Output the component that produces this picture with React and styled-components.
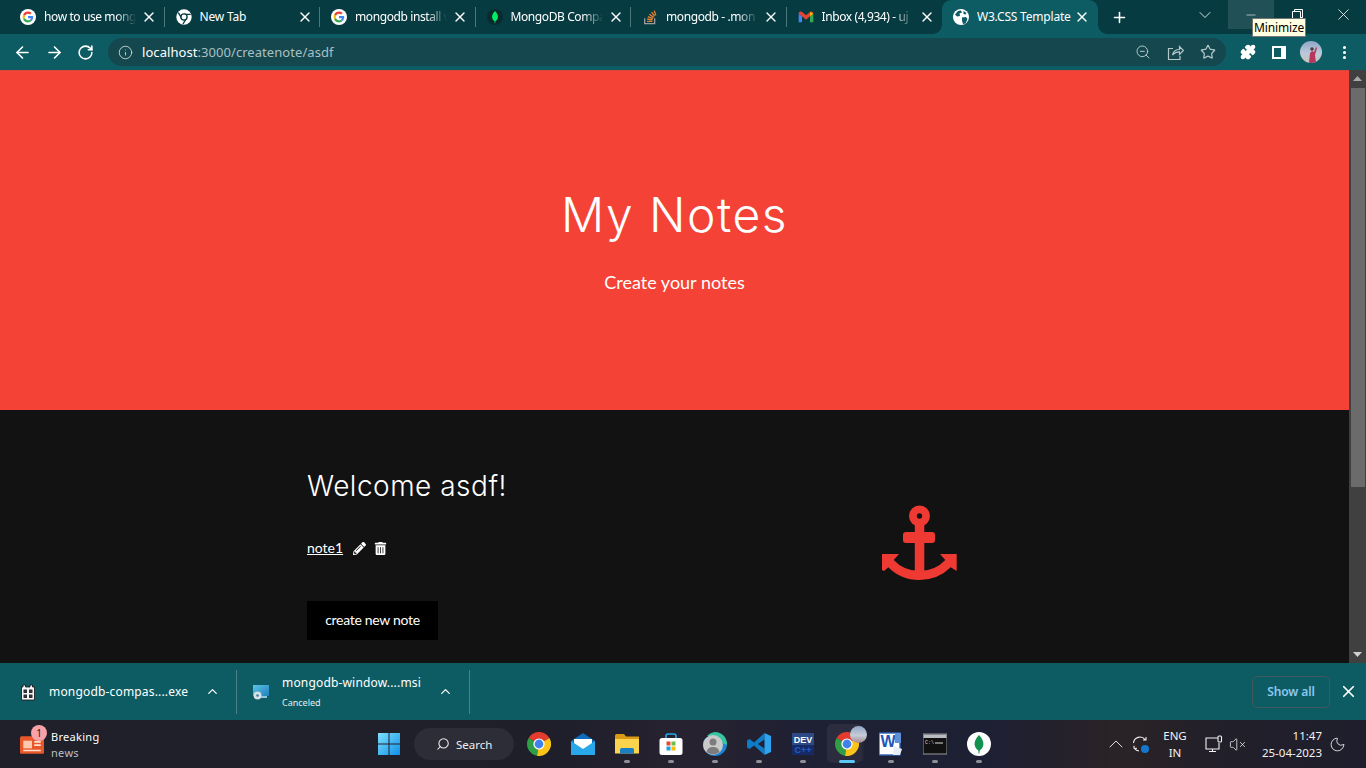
import React from "react";
import styled, { createGlobalStyle } from "styled-components";
import { ArrowLeft, ArrowRight, RotateCw, Info, ZoomOut, Star, ChevronDown, ChevronUp, Minus, X, Plus, Search, EllipsisVertical, VolumeX, Moon, Puzzle } from "lucide-react";
import { FaPencilAlt, FaTrashAlt } from "react-icons/fa";

const Global = createGlobalStyle`
  html, body { margin: 0; padding: 0; background: #121212; overflow: hidden; }
  * { box-sizing: border-box; }
  #root { width: 1366px; height: 768px; }
`;

const Screen = styled.div`
  width: 1366px; height: 768px; display: flex; flex-direction: column; overflow: hidden; position: relative;
  font-family: "Noto Sans", "Open Sans", sans-serif; color: #fff;
`;

const TabStrip = styled.div`
  height: 34px; flex: none; background: #073b42; display: flex; align-items: stretch; padding-left: 9px; position: relative;
`;
const Tab = styled.div`
  width: 155.5px; flex: none; display: flex; align-items: center; padding-left: 11px; position: relative;
  &::after {
    content: ""; position: absolute; right: 0; top: 7px; bottom: 7px; width: 1px;
    background: ${p => (p.$sep ? "#4d777c" : "transparent")};
  }
`;
const ActiveTab = styled(Tab)`
  background: #0e5c63; border-radius: 9px 9px 0 0;
  &::before, &::after {
    content: ""; position: absolute; top: auto; bottom: 0; width: 9px; height: 9px;
  }
  &::before { left: -9px; right: auto; background: radial-gradient(circle at 0 0, transparent 8.5px, #0e5c63 9px); }
  &::after { right: -9px; left: auto; background: radial-gradient(circle at 100% 0, transparent 8.5px, #0e5c63 9px); }
`;
const FavSlot = styled.span`width: 16px; height: 16px; flex: none; display: flex; margin-right: 8px;`;
const TabTitle = styled.span`
  font-size: 12px; line-height: 16px; width: 94px; flex: none; white-space: nowrap; overflow: hidden; color: #fff;
  letter-spacing: ${p => (p.$full ? "-0.2px" : "-0.4px")};
  -webkit-mask-image: ${p => (p.$full ? "none" : "linear-gradient(90deg,#000 76%,transparent 98%)")};
  mask-image: ${p => (p.$full ? "none" : "linear-gradient(90deg,#000 76%,transparent 98%)")};
`;
const TabClose = styled.span`margin-left: 3px; display: flex; color: #fff;`;
const NewTab = styled.span`margin-left: 13px; display: flex; align-items: center; color: #fff;`;
const WinControls = styled.div`margin-left: auto; display: flex; align-items: flex-start; height: 29px;`;
const WinBtn = styled.span`
  width: 46px; height: 29px; display: flex; align-items: center; justify-content: center; color: #fff;
  background: ${p => (p.$hover ? "#215057" : "transparent")};
`;
const Tooltip = styled.div`
  position: absolute; left: 1252px; top: 18px; width: 54px; height: 19px; background: #ffffe1; border: 1px solid #767676;
  color: #000; font-size: 12px; line-height: 17px; text-align: center; z-index: 5; letter-spacing: -0.15px;
`;

const Toolbar = styled.div`
  height: 36px; flex: none; background: #0e5c63; display: flex; align-items: center; padding-left: 13px; color: #fff;
`;
const NavBtn = styled.span`width: 32px; height: 20px; flex: none; display: flex; align-items: center; justify-content: flex-start;`;
const Omnibox = styled.div`
  width: 1118px; height: 28px; margin-left: -1px; border-radius: 14px; background: #15474f; display: flex; align-items: center; padding: 0 10px;
`;
const Url = styled.span`font-size: 13px; margin-left: 9px; color: #a9c0c3; letter-spacing: 0.06px; b { font-weight: 400; color: #fff; }`;
const OmniIcons = styled.div`margin-left: auto; display: flex; gap: 16px; color: #b4c8ca; align-items: center;`;
const ToolRight = styled.div`display: flex; align-items: center; margin-left: 14px; gap: 14px;`;
const PuzzleGlyph = styled(Puzzle)`margin-right: 2px; fill: #fff;`;
const PanelIcon = styled.span`
  width: 14px; height: 13px; background: linear-gradient(90deg, #0e5c63 0 7px, #fff 7px); border: 2px solid #fff; display: block;
`;
const Avatar = styled.span`
  width: 22px; height: 22px; border-radius: 50%; overflow: hidden; display: block;
  background: linear-gradient(180deg,#8fa6c6 0%,#bcc9dc 55%,#c9c2b6 100%);
`;

const Page = styled.div`height: 593px; flex: none; display: flex; background: #121212;`;
const Main = styled.main`flex: 1; min-width: 0; display: flex; flex-direction: column;`;
const Hero = styled.header`
  height: 340px; background: #f44336; text-align: center; padding-top: 115px; border-top: 1px solid #d9453a;
`;
const Title = styled.h1`
  margin: 0; font: 300 48px/58px Inter, sans-serif; color: #fff; letter-spacing: 1.5px;
`;
const Sub = styled.p`margin: 26px 0 0; font: 400 18px/24px Lato, sans-serif; color: #fff;`;
const Dark = styled.section`flex: 1; background: #121212; display: flex; padding-left: 307px; padding-top: 58px;`;
const Left = styled.div`width: 575px; flex: none;`;
const Welcome = styled.h2`margin: 0; font: 300 28px/36px Inter, sans-serif; color: #fff; letter-spacing: 0.5px;`;
const NoteRow = styled.div`margin-top: 32px; height: 24px; display: flex; align-items: center; gap: 10px; font: 400 14px/24px Lato, sans-serif;`;
const NoteLink = styled.a`color: #fff; text-decoration: underline;`;
const PencilGlyph = styled(FaPencilAlt)`margin-right: -2px;`;
const CreateBtn = styled.button`
  display: block; margin-top: 41px; width: 131px; height: 39px; background: #000; color: #fff; border: 0; padding: 0 0 2px;
  font: 400 14px/37px Lato, sans-serif; letter-spacing: -0.3px;
`;
const AnchorWrap = styled.div`margin-top: 37px; align-self: flex-start; display: flex;`;

const Scrollbar = styled.div`width: 17px; flex: none; background: #404040; display: flex; flex-direction: column; align-items: center; color: #a0a0a0;`;
const ScrollArrow = styled.span`height: 17px; flex: none; display: flex; align-items: center; justify-content: center;`;
const Thumb = styled.div`width: 14px; height: 399px; margin-top: 1px; background: #6b6b6b;`;
const ScrollSpace = styled.div`flex: 1;`;

const DownloadBar = styled.div`height: 57px; flex: none; background: #0e5c63; display: flex; align-items: center; padding-left: 20px;`;
const DlItem = styled.div`width: ${p => p.$w}px; padding-left: ${p => p.$pl || 0}px; flex: none; display: flex; align-items: center;`;
const DlIcon = styled.span`width: 16px; height: 16px; flex: none; display: flex; margin-right: 13px;`;
const DlText = styled.div`width: 139px; flex: none; white-space: nowrap; display: flex; flex-direction: column;`;
const DlName = styled.span`font-size: 12px; line-height: 16px; letter-spacing: 0.17px;`;
const DlNameTop = styled(DlName)`margin-top: 1px;`;
const DlStatus = styled.span`font-size: 9px; line-height: 13px; margin-top: 5px; color: #e4eeee;`;
const DlChev = styled.span`margin-left: 17px; display: flex; color: #fff;`;
const DlSep = styled.span`width: 1px; height: 44px; background: #4a8185; flex: none;`;
const ShowAll = styled.button`
  margin-left: auto; width: 78px; height: 32px; border: 1px solid #41585e; border-radius: 5px; background: transparent; color: #8cc6ef;
  font: 600 12px "Noto Sans", sans-serif; padding: 0; letter-spacing: -0.1px;
`;
const DlClose = styled.span`width: 36px; display: flex; justify-content: center; color: #fff;`;

const Taskbar = styled.div`
  height: 48px; flex: none; display: flex; align-items: center; position: relative;
  background: linear-gradient(90deg,#1f2029 0%,#20202a 28%,#1f1f2b 42%,#27222f 50%,#1e2034 60%,#1d1f33 72%,#2a2326 82%,#211f2a 90%,#1f1e2c 100%);
`;
const News = styled.div`width: 373px; flex: none; padding-left: 20px; display: flex; align-items: center; position: relative;`;
const NewsIcon = styled.span`width: 24px; height: 22px; display: flex; margin-right: 7px; position: relative;`;
const Badge = styled.span`
  position: absolute; left: 11px; top: -8px; width: 16px; height: 16px; border-radius: 50%; background: #f7a1a9; color: #30161a;
  font-size: 10px; line-height: 16px; text-align: center;
`;
const NewsText = styled.div`display: flex; flex-direction: column; font-size: 11px; line-height: 16px; letter-spacing: 0.3px; margin-top: 2px;`;
const NewsSub = styled.span`color: #bdbdc4;`;
const StartBtn = styled.span`width: 24px; height: 24px; display: flex; flex: none; margin-left: 4px;`;
const SearchPill = styled.div`
  width: 100px; height: 32px; margin-left: 13px; border-radius: 16px; background: #2d2d38; flex: none; display: flex; align-items: center; padding-left: 22px; gap: 6px;
  font-size: 11.5px; color: #eee;
`;
const SearchGlyph = styled(Search)`transform: scaleX(-1);`;
const Apps = styled.div`display: flex; margin-left: 3px; flex: none;`;
const AppSlot = styled.div`
  width: 44px; height: 48px; display: flex; align-items: center; justify-content: center; position: relative;
  &::before {
    content: ""; position: absolute; inset: 4px 7px 5px 2px; border-radius: 5px; display: ${p => (p.$active ? "block" : "none")};
    background: #2c2c3f; box-shadow: 3px 0 0 -1px #262636;
  }
  &::after {
    content: ""; position: absolute; bottom: 5px; left: 50%; transform: translateX(-50%); height: 3px; border-radius: 2px;
    width: ${p => (p.$active ? "16px" : "6px")}; background: ${p => (p.$active ? "#5cc8f8" : "#8f8f98")};
    display: ${p => (p.$dot ? "block" : "none")};
  }
  > * { position: relative; }
`;
const AppAvatar = styled.span`
  position: absolute !important; left: 25px; top: 6px; width: 17px; height: 17px; border-radius: 50%;
  background: linear-gradient(180deg,#8fa6c6 0%,#c5ccd8 55%,#a88a8e 100%);
`;
const Tray = styled.div`margin-left: auto; display: flex; align-items: center; color: #f2f2f2; padding-right: 20px;`;
const TrayIcon = styled.span`display: flex; position: relative; margin-left: ${p => p.$ml || 0}px;`;
const Dot = styled.span`position: absolute; right: 0; bottom: 0; width: 8px; height: 8px; border-radius: 50%; background: #1478d2;`;
const Lang = styled.div`width: 30px; margin-left: 11px; text-align: center; font-size: 11.5px; line-height: 17px;`;
const Clock = styled.div`width: 70px; margin-left: 6px; text-align: right; font-size: 11.5px; line-height: 17px; white-space: nowrap;`;

const G = () => (
  <svg width="16" height="16" viewBox="0 0 16 16">
    <circle cx="8" cy="8" r="8" fill="#fff" />
    <g transform="translate(2.6 2.6) scale(.225)">
      <path fill="#EA4335" d="M24 9.5c3.54 0 6.71 1.22 9.21 3.6l6.85-6.85C35.9 2.38 30.47 0 24 0 14.62 0 6.51 5.38 2.56 13.22l7.98 6.19C12.43 13.72 17.74 9.5 24 9.5z" />
      <path fill="#4285F4" d="M46.98 24.55c0-1.57-.15-3.09-.38-4.55H24v9.02h12.94c-.58 2.96-2.26 5.48-4.78 7.18l7.73 6c4.51-4.18 7.09-10.36 7.09-17.65z" />
      <path fill="#FBBC05" d="M10.53 28.59c-.48-1.45-.76-2.99-.76-4.59s.27-3.14.76-4.59l-7.98-6.19C.92 16.46 0 20.12 0 24c0 3.88.92 7.54 2.56 10.78l7.97-6.19z" />
      <path fill="#34A853" d="M24 48c6.48 0 11.93-2.13 16.08-5.81l-7.73-6c-2.15 1.45-4.92 2.3-8.35 2.3-6.26 0-11.57-4.22-13.47-9.91l-7.98 6.19C6.51 42.62 14.62 48 24 48z" />
    </g>
  </svg>
);
const ChromeMono = () => (
  <svg width="16" height="16" viewBox="0 0 24 24">
    <circle cx="12" cy="12" r="11.500" fill="#fff" />
    <path d="M12 8h10M8.500 14 3.500 5.500M15.500 14l-5 8.500" stroke="#073b42" strokeWidth="2" fill="none" />
    <circle cx="12" cy="12" r="4.600" fill="#fff" stroke="#073b42" strokeWidth="2" />
  </svg>
);
const Leaf = ({ c = "#00ed64", d = "#0b2a2e", size = 16 }) => (
  <svg width={size} height={size} viewBox="0 0 24 24">
    <circle cx="12" cy="12" r="12" fill={d} />
    <path d="M12 3c3.400 3.600 4.600 6.600 4.400 9.400-.2 3-2.200 5-3.700 6l-.3 3h-.8l-.3-3c-1.500-1-3.500-3-3.700-6C7.400 9.600 8.600 6.600 12 3z" fill={c} />
  </svg>
);
const SO = () => (
  <svg width="16" height="16" viewBox="0 0 24 24">
    <path d="M4 14v8h15v-8" fill="none" stroke="#9a9a9a" strokeWidth="2" />
    <path d="M7.500 18.500h8M7.800 15l8 1.200M8.800 11.300l7.600 3M11 7.800l6.500 4.800M14.400 4.600l4.600 6.200M18.400 2.500l2.300 7" stroke="#e8802c" strokeWidth="2" fill="none" />
  </svg>
);
const Gmail = () => (
  <svg width="16" height="16" viewBox="0 0 24 24">
    <path d="M1 7v13h5V11z" fill="#4285f4" />
    <path d="M23 7v13h-5V11z" fill="#34a853" />
    <path d="M1 7c0-3 3-4 5-2.500l6 5 6-5c2-1.500 5-.5 5 2.500l-5 4-6 5-6-5z" fill="#ea4335" />
    <path d="M18 4.500 23 7l-5 4z" fill="#fbbc05" />
  </svg>
);
const Globe = () => (
  <svg width="16" height="16" viewBox="0 0 16 16">
    <circle cx="8" cy="8" r="8" fill="#fff" />
    <path d="M2 5.500 5 2l3-.5 1 2-2.500 1L7 7 4 7.500zM9 8.500l4-.5 1.500 2-2 4.500-2.500.5-1-3.500zM10.500 2l3 2-1 1.500-2-.5z" fill="#0e5c63" />
  </svg>
);
const ShareGlyph = () => (
  <svg width="17" height="17" viewBox="0 0 17 17" fill="none" stroke="#b4c8ca" strokeWidth="1.200">
    <path d="M6 4.500H1.500V15.500H13V12" />
    <path d="M5.500 11c.8-3.500 3.500-5.500 7-5.500V2.500L16.500 6.500 12.500 10.500V7.800c-3 0-5.200 1-7 3.200z" />
  </svg>
);
const Anchor = () => (
  <svg width="76" height="76" viewBox="0 0 76 76" fill="#ee3a32">
    <circle cx="37.500" cy="11" r="6.600" fill="none" stroke="#ee3a32" strokeWidth="7.800" />
    <rect x="21" y="27" width="32" height="11" rx="3" />
    <rect x="32.800" y="16" width="9.500" height="52" />
    <path d="M0 49H17L11.700 55Q22 66 37.500 66T63.300 55L58 49H74.700V66L68.700 62.300Q56 75 37.400 75T6.300 62.300L2 66L0 65Z" />
  </svg>
);
const Chrome = ({ size = 24 }) => (
  <svg width={size} height={size} viewBox="0 0 24 24">
    <path d="M12 12 1.600 6A12 12 0 0 1 22.400 6Z" fill="#e33b2e" />
    <path d="M12 12 1.600 6A12 12 0 0 0 10 23.800Z" fill="#2f9e46" />
    <path d="M12 12 22.400 6A12 12 0 0 1 10 23.800Z" fill="#fcc419" />
    <circle cx="12" cy="12" r="5.600" fill="#fff" />
    <circle cx="12" cy="12" r="4.400" fill="#3f82ee" />
  </svg>
);
const StartIcon = () => (
  <svg width="24" height="24" viewBox="0 0 24 24">
    <defs><linearGradient id="st" x1="0" y1="0" x2="1" y2="1"><stop offset="0" stopColor="#7fe0ff" /><stop offset="1" stopColor="#0f8fe8" /></linearGradient></defs>
    <path d="M1 1h10.500v10.500H1zM12.500 1H23v10.500H12.500zM1 12.500h10.500V23H1zM12.500 12.500H23V23H12.500z" fill="url(#st)" />
  </svg>
);
const Mail = () => (
  <svg width="24" height="24" viewBox="0 0 24 24">
    <path d="M0 9 12 1l12 8v13H0z" fill="#0f6cbd" />
    <path d="M3 7h18v6L12 18 3 13z" fill="#fff" />
    <path d="M0 9v14h24V9L12 17z" fill="#28a8ea" />
  </svg>
);
const Folder = () => (
  <svg width="24" height="24" viewBox="0 0 24 24">
    <path d="M0 3.500 1 2h8l2 2.500h13V8H0z" fill="#d99a14" />
    <path d="M0 7h24v14.500H0z" fill="#fcd34d" />
    <path d="M5 17.500q0-1.500 1.500-1.500h11q1.500 0 1.500 1.500V21.500H5z" fill="#1b7fc4" />
  </svg>
);
const Store = () => (
  <svg width="24" height="24" viewBox="0 0 24 24">
    <path d="M7 7V4q0-2 2-2h6q2 0 2 2v3" fill="none" stroke="#28a8ea" strokeWidth="1.600" />
    <rect x="0.500" y="6" width="23" height="17" rx="2.500" fill="#fff" />
    <path d="M7.500 9.500h4v4h-4z" fill="#e8482f" /><path d="M12.500 9.500h4v4h-4z" fill="#6cc04a" />
    <path d="M7.500 14.500h4v4h-4z" fill="#1ba1e2" /><path d="M12.500 14.500h4v4h-4z" fill="#fbb90b" />
  </svg>
);
const Edge = () => (
  <svg width="24" height="24" viewBox="0 0 24 24">
    <path d="M12 0a12 12 0 0 1 12 12c0 3-3 5-6 5H8C14 15 12 6 4 4a12 12 0 0 1 8-4z" fill="#37c6a0" />
    <path d="M0 12C0 5 9 1 17 9c2 2 7 5 7 3a12 12 0 0 1-12 12A12 12 0 0 1 0 12z" fill="#1b84d6" />
    <circle cx="10" cy="13" r="10" fill="#c9c9c9" />
    <circle cx="10" cy="10" r="3.500" fill="#7d7d7d" />
    <path d="M3.500 20c1-4 3.500-5 6.500-5s5.500 1 6.500 5a10 10 0 0 1-13 0z" fill="#7d7d7d" />
  </svg>
);
const VSCode = () => (
  <svg width="24" height="24" viewBox="0 0 24 24">
    <path fillRule="evenodd" d="M17.500 1 7 10.500 2.500 7 0 8.500v7L2.500 17 7 13.500 17.500 23V16.500L11 12l6.500-4.500z" fill="#0f7cc8" />
    <path d="M17.500 1 24 4v16l-6.500 3z" fill="#2ea3f0" />
  </svg>
);
const DevCpp = () => (
  <svg width="24" height="24" viewBox="0 0 24 24">
    <rect x="1" y="1" width="22" height="22" fill="#2c4a86" />
    <rect x="1" y="13" width="22" height="10" fill="#162a66" />
    <text x="12" y="11" textAnchor="middle" fontFamily="Liberation Sans" fontWeight="700" fontSize="9" fill="#fff">DEV</text>
    <text x="12" y="21" textAnchor="middle" fontFamily="Liberation Sans" fontWeight="700" fontSize="9" fill="#1f5ec4">C++</text>
  </svg>
);
const Word = () => (
  <svg width="24" height="24" viewBox="0 0 24 24">
    <rect x="0" y="1" width="21" height="22" fill="#fff" />
    <rect x="0" y="1" width="21" height="22" fill="none" stroke="#2e62b8" strokeWidth="1.400" />
    <text x="9" y="15" textAnchor="middle" fontFamily="Liberation Sans" fontWeight="700" fontSize="16" fill="#1f56b5">W</text>
    <path d="M16 1h6v10h-6z" fill="#5f8fd6" />
    <path d="M15 14l8 3-2 6h-7z" fill="#e8edf6" />
  </svg>
);
const Cmd = () => (
  <svg width="24" height="24" viewBox="0 0 24 24">
    <rect x="0" y="2" width="24" height="20" fill="#111" stroke="#9a9a9a" />
    <rect x="0.500" y="2.500" width="23" height="3.500" fill="#b9bcc2" />
    <text x="2" y="12" fontFamily="Liberation Mono" fontSize="5" fill="#ddd">C:\</text>
    <path d="M12 11h8" stroke="#ddd" />
  </svg>
);
const Installer = () => (
  <svg width="16" height="17" viewBox="0 0 16 17">
    <path d="M1.500 3h1.500V1h2.500v2h4.500V1h2.500v2h2V16h-13z" fill="#f5f5f5" stroke="#111" strokeWidth=".8" />
    <path d="M3.500 5.500h3.500v3.500H3.500zM9 5.500h3.500v3.500H9zM3.500 10.500h3.500v3.500H3.500zM9 10.500h3.500v3.500H9z" fill="#2a3034" />
  </svg>
);
const Msi = () => (
  <svg width="16" height="16" viewBox="0 0 16 16">
    <defs><linearGradient id="ms" x1="0" y1="0" x2="1" y2="1"><stop offset="0" stopColor="#5cc3e8" /><stop offset="1" stopColor="#1f7fb8" /></linearGradient></defs>
    <rect x="0" y="1" width="16" height="11" fill="url(#ms)" />
    <rect x="4" y="12" width="10" height="2" fill="#8fc6dc" />
    <circle cx="4.500" cy="11.500" r="4" fill="#d5dfe4" />
    <circle cx="4.500" cy="11.500" r="1.200" fill="#2f7fa6" />
  </svg>
);
const NewsGlyph = () => (
  <svg width="24" height="22" viewBox="0 0 22 20">
    <rect x="0" y="3" width="22" height="16" rx="1.500" fill="#e8572a" />
    <rect x="3" y="7" width="8" height="7" fill="#ffc9b0" />
    <path d="M13 8h6M13 11h6M3 16h16" stroke="#ffe0d0" strokeWidth="1.500" />
  </svg>
);
const Sync = () => (
  <svg width="18" height="18" viewBox="0 0 18 18" fill="none" stroke="#f2f2f2" strokeWidth="1.100">
    <path d="M2.500 8A6.500 6.500 0 0 1 14 4.500M15 2v3h-3M3 13.500l3-.2M3 10.800v2.700M3.500 13.500A6.500 6.500 0 0 0 8 16" />
  </svg>
);
const Monitor = () => (
  <svg width="18" height="18" viewBox="0 0 18 18" fill="none" stroke="#f2f2f2" strokeWidth="1.100">
    <path d="M13 3H1v11h13V8M7.500 14v2.500M4 16.500h7" />
    <rect x="13" y="1" width="3.500" height="6" rx="1" />
  </svg>
);

const tabs = [
  { t: "how to use mong", i: <G />, sep: true },
  { t: "New Tab", i: <ChromeMono />, sep: true, full: true },
  { t: "mongodb install v", i: <G />, sep: true },
  { t: "MongoDB Compa", i: <Leaf />, sep: true },
  { t: "mongodb - .mon", i: <SO />, sep: true },
  { t: "Inbox (4,934) - uj", i: <Gmail /> },
];
const apps = [
  { i: <Chrome /> }, { i: <Mail /> }, { i: <Folder />, dot: true }, { i: <Store />, dot: true }, { i: <Edge />, dot: true },
  { i: <VSCode />, dot: true }, { i: <DevCpp />, dot: true }, { i: <Chrome />, dot: true, active: true }, { i: <Word />, dot: true },
  { i: <Cmd />, dot: true }, { i: <Leaf c="#12924f" d="#fff" size={24} />, dot: true },
];

export default function App() {
  return (
    <Screen>
      <Global />
      <TabStrip>
        {tabs.map(tb => (
          <Tab key={tb.t} $sep={tb.sep}>
            <FavSlot>{tb.i}</FavSlot>
            <TabTitle $full={tb.full}>{tb.t}</TabTitle>
            <TabClose><X size={16} strokeWidth={2} /></TabClose>
          </Tab>
        ))}
        <ActiveTab>
          <FavSlot><Globe /></FavSlot>
          <TabTitle $full>W3.CSS Template</TabTitle>
          <TabClose><X size={16} strokeWidth={2} /></TabClose>
        </ActiveTab>
        <NewTab><Plus size={17} strokeWidth={2.200} /></NewTab>
        <WinControls>
          <WinBtn><ChevronDown size={20} strokeWidth={1} /></WinBtn>
          <WinBtn $hover><Minus size={14} strokeWidth={1} /></WinBtn>
          <WinBtn>
            <svg width="11" height="11" viewBox="0 0 11 11" fill="none" stroke="#fff"><path d="M.5 2.500h8v8h-8zM2.500 2.500v-2h8v8h-2" /></svg>
          </WinBtn>
          <WinBtn><X size={19} strokeWidth={1} /></WinBtn>
        </WinControls>
        <Tooltip>Minimize</Tooltip>
      </TabStrip>

      <Toolbar>
        <NavBtn><ArrowLeft size={19} strokeWidth={2} /></NavBtn>
        <NavBtn><ArrowRight size={19} strokeWidth={2} /></NavBtn>
        <NavBtn><RotateCw size={17} strokeWidth={2.200} /></NavBtn>
        <Omnibox>
          <Info size={15} color="#c3d3d5" strokeWidth={1.500} />
          <Url><b>localhost</b>:3000/createnote/asdf</Url>
          <OmniIcons>
            <ZoomOut size={16} strokeWidth={1.500} />
            <ShareGlyph />
            <Star size={16} strokeWidth={1.800} />
          </OmniIcons>
        </Omnibox>
        <ToolRight>
          <PuzzleGlyph size={16} strokeWidth={2} />
          <PanelIcon />
          <Avatar>
            <svg width="22" height="22" viewBox="0 0 22 22">
              <path d="M9 22l1-10 2-2 2 1 2-5 1 1-2 7 1 8z" fill="#b5365f" />
              <circle cx="12" cy="8" r="1.800" fill="#5a3a3a" />
            </svg>
          </Avatar>
          <EllipsisVertical size={17} strokeWidth={2.400} />
        </ToolRight>
      </Toolbar>

      <Page>
        <Main>
          <Hero>
            <Title>My Notes</Title>
            <Sub>Create your notes</Sub>
          </Hero>
          <Dark>
            <Left>
              <Welcome>Welcome asdf!</Welcome>
              <NoteRow>
                <NoteLink href="#">note1</NoteLink>
                <PencilGlyph size={13} />
                <FaTrashAlt size={13} />
              </NoteRow>
              <CreateBtn>create new note</CreateBtn>
            </Left>
            <AnchorWrap><Anchor /></AnchorWrap>
          </Dark>
        </Main>
        <Scrollbar>
          <ScrollArrow><svg width="9" height="5" viewBox="0 0 9 5"><path d="M4.500 0 9 5H0z" fill="#a8a8a8" /></svg></ScrollArrow>
          <Thumb />
          <ScrollSpace />
          <ScrollArrow><svg width="9" height="5" viewBox="0 0 9 5"><path d="M4.500 5 9 0H0z" fill="#d0d0d0" /></svg></ScrollArrow>
        </Scrollbar>
      </Page>

      <DownloadBar>
        <DlItem $w={216}>
          <DlIcon><Installer /></DlIcon>
          <DlText><DlName>mongodb-compas....exe</DlName></DlText>
          <DlChev><ChevronUp size={15} strokeWidth={2} /></DlChev>
        </DlItem>
        <DlSep />
        <DlItem $w={232} $pl={16}>
          <DlIcon><Msi /></DlIcon>
          <DlText>
            <DlNameTop>mongodb-window....msi</DlNameTop>
            <DlStatus>Canceled</DlStatus>
          </DlText>
          <DlChev><ChevronUp size={15} strokeWidth={2} /></DlChev>
        </DlItem>
        <DlSep />
        <ShowAll>Show all</ShowAll>
        <DlClose><X size={19} strokeWidth={2.200} /></DlClose>
      </DownloadBar>

      <Taskbar>
        <News>
          <NewsIcon>
            <NewsGlyph />
            <Badge>1</Badge>
          </NewsIcon>
          <NewsText>Breaking<NewsSub>news</NewsSub></NewsText>
        </News>
        <StartBtn><StartIcon /></StartBtn>
        <SearchPill><SearchGlyph size={14} strokeWidth={1.800} />Search</SearchPill>
        <Apps>
          {apps.map((a, i) => (
            <AppSlot key={i} $dot={a.dot} $active={a.active}>
              {a.i}
              {a.active && <AppAvatar />}
            </AppSlot>
          ))}
        </Apps>
        <Tray>
          <ChevronUp size={24} strokeWidth={0.900} />
          <TrayIcon $ml={3}><Sync /><Dot /></TrayIcon>
          <Lang>ENG<br />IN</Lang>
          <TrayIcon $ml={15}><Monitor /></TrayIcon>
          <TrayIcon $ml={6}><VolumeX size={17} strokeWidth={1.100} /></TrayIcon>
          <Clock>11:47<br />25-04-2023</Clock>
          <TrayIcon $ml={7}><Moon size={17} strokeWidth={1.200} /></TrayIcon>
        </Tray>
      </Taskbar>
    </Screen>
  );
}
